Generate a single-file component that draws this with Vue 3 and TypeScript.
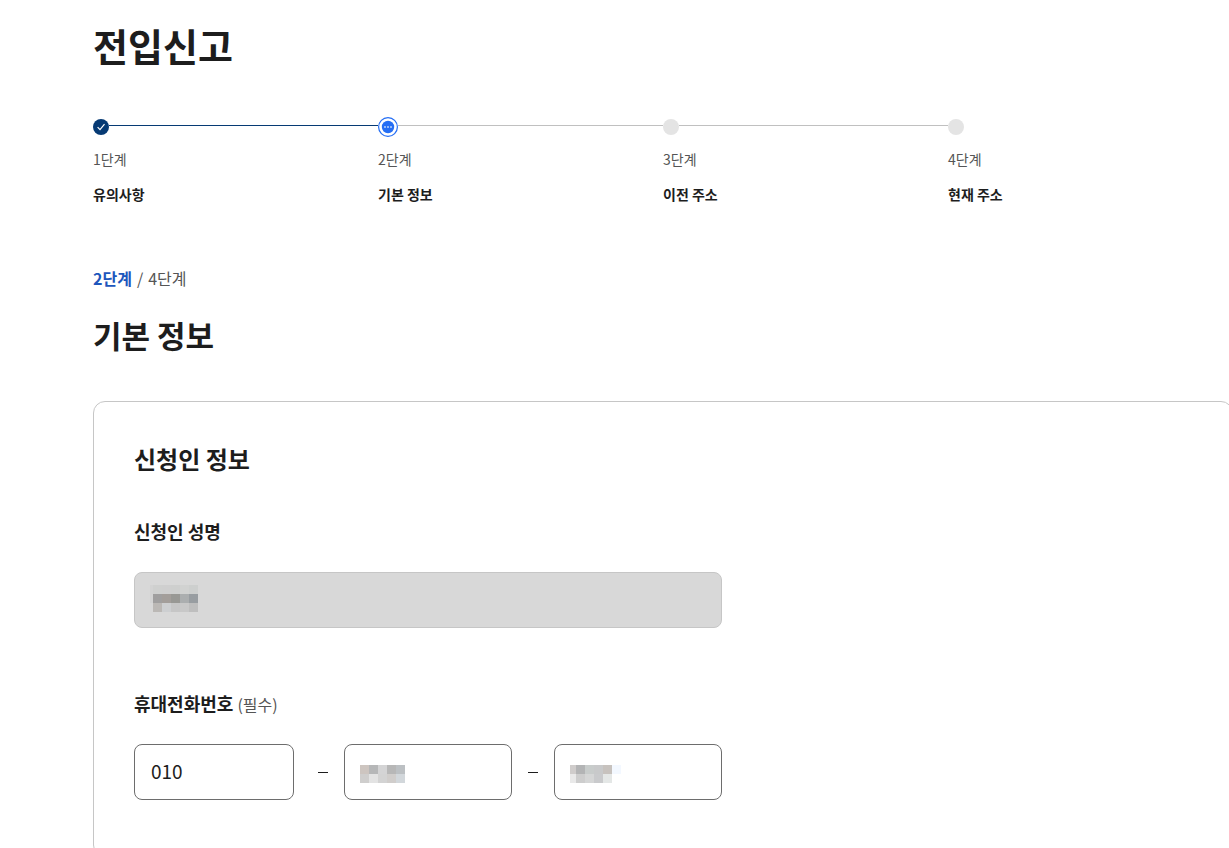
<script setup lang="ts">
type StepState = 'done' | 'current' | 'todo'

interface Step {
  label: string
  title: string
  state: StepState
}

interface Block {
  x: number
  y: number
  w: number
  h: number
  fill: string
}

const steps: Step[] = [
  { label: '1단계', title: '유의사항', state: 'done' },
  { label: '2단계', title: '기본 정보', state: 'current' },
  { label: '3단계', title: '이전 주소', state: 'todo' },
  { label: '4단계', title: '현재 주소', state: 'todo' },
]

const row = (x: number, y: number, fills: string[]): Block[] =>
  fills.map((fill, i) => ({ x: x + i * 9, y, w: 9, h: 9, fill }))

// Redaction mosaics covering the personal values
const nameMask: Block[] = [
  { x: 0, y: 0, w: 3, h: 18, fill: '#d3d3d3' },
  ...row(3, 0, ['#cfd0cf', '#cfcfcf', '#cecfce', '#d1d2d1', '#cdcfce']),
  ...row(3, 9, ['#a09f9f', '#a39e9a', '#989894', '#abaeaf', '#989da1']),
  ...row(3, 18, ['#bbb8b5', '#cdcfd1', '#c6c6c6', '#c8c8c8', '#bebebe']),
]
const middleMask: Block[] = [
  ...row(0, 0, ['#cdc5c0', '#b6b7b8', '#d4d4d5', '#b7b7b7', '#bcc0c3']),
  ...row(0, 9, ['#cfcecd', '#e3e3e3', '#d3d3d3', '#d0cdcb', '#d2d7db']),
]
const lastMask: Block[] = [
  { x: 0, y: 0, w: 6, h: 9, fill: '#cfcccb' },
  ...row(6, 0, ['#b3b4b5', '#c8cccb', '#c8c9ca', '#c7c2be', '#f3f8ff']),
  { x: 0, y: 9, w: 6, h: 9, fill: '#e9e9e9' },
  ...row(6, 9, ['#cdcdcd', '#d5d6d6', '#c9cacc', '#e4e7e6']),
]
</script>

<template>
  <main class="page">
    <h1 class="page-title">전입신고</h1>

    <ol class="steps">
      <li v-for="step in steps" :key="step.label" class="step">
        <div class="track">
          <svg v-if="step.state === 'done'" class="marker" width="16" height="16" viewBox="0 0 16 16" aria-hidden="true">
            <circle cx="8" cy="8" r="8" fill="#063a74" />
            <path d="M4.6 8.2 7 10.6 11.5 5.2" fill="none" stroke="#fff" stroke-width="1.2" />
          </svg>
          <svg v-else-if="step.state === 'current'" class="marker" width="20" height="20" viewBox="0 0 20 20" aria-hidden="true">
            <circle cx="10" cy="10" r="9.4" fill="#fff" stroke="#256ef4" stroke-width="1.2" />
            <circle cx="10" cy="10" r="6.2" fill="#256ef4" />
            <path d="M6 9.3h2v1.4H6zM9 9.3h2v1.4H9zM12 9.3h2v1.4h-2z" fill="#b5cffb" />
          </svg>
          <svg v-else class="marker" width="16" height="16" viewBox="0 0 16 16" aria-hidden="true">
            <circle cx="8" cy="8" r="8" fill="#e4e4e4" />
          </svg>
          <span class="line" :class="step.state"></span>
        </div>
        <span class="step-label">{{ step.label }}</span>
        <strong class="step-title">{{ step.title }}</strong>
      </li>
    </ol>

    <p class="progress"><strong>2단계</strong><span class="slash">/</span>4단계</p>
    <h2 class="section-title">기본 정보</h2>

    <form class="card" @submit.prevent>
      <h3 class="card-title">신청인 정보</h3>

      <div class="form-group">
        <label class="label" for="applicant">신청인 성명</label>
        <div class="field">
          <input id="applicant" type="text" disabled />
          <svg class="mask name" width="48" height="27" aria-hidden="true" shape-rendering="crispEdges">
            <rect v-for="(b, i) in nameMask" :key="i" :x="b.x" :y="b.y" :width="b.w" :height="b.h" :fill="b.fill" />
          </svg>
        </div>
      </div>

      <div class="form-group" role="group" aria-labelledby="phone-label">
        <label id="phone-label" class="label" for="phone-1">휴대전화번호 <span class="required">(필수)</span></label>
        <div class="phone">
          <div class="field prefix">
            <input id="phone-1" type="text" value="010" />
          </div>
          <span class="dash"></span>
          <div class="field">
            <input id="phone-2" type="text" aria-label="휴대전화번호 가운데 자리" />
            <svg class="mask" width="45" height="18" aria-hidden="true" shape-rendering="crispEdges">
              <rect v-for="(b, i) in middleMask" :key="i" :x="b.x" :y="b.y" :width="b.w" :height="b.h" :fill="b.fill" />
            </svg>
          </div>
          <span class="dash"></span>
          <div class="field">
            <input id="phone-3" type="text" aria-label="휴대전화번호 마지막 자리" />
            <svg class="mask" width="51" height="18" aria-hidden="true" shape-rendering="crispEdges">
              <rect v-for="(b, i) in lastMask" :key="i" :x="b.x" :y="b.y" :width="b.w" :height="b.h" :fill="b.fill" />
            </svg>
          </div>
        </div>
      </div>
    </form>
  </main>
</template>

<style>
body {
  margin: 0;
  background: #fff;
  overflow-x: hidden;
}
</style>

<style scoped>
.page {
  margin: 0 -4px 0 93px;
  padding-top: 17px;
  font-family: "Noto Sans CJK KR", "Noto Sans", sans-serif;
  color: #1d1d1d;
}

h1,
h2,
h3,
p,
ol {
  margin: 0;
  padding: 0;
}

.page-title {
  font-size: 38px;
  line-height: 56px;
  font-weight: 700;
}

.steps {
  display: grid;
  grid-template-columns: repeat(4, 1fr);
  margin-top: 44px;
  list-style: none;
}

.step {
  display: flex;
  flex-direction: column;
}

.track {
  display: flex;
  align-items: center;
  height: 20px;
}

.marker {
  flex: none;
}

.line {
  flex: 1;
  height: 1px;
  margin-bottom: 3px;
  background: #c0c0c0;
}

.line.done {
  background: #063a74;
}

.step:last-child .line {
  display: none;
}

.step-label {
  margin-top: 12px;
  font-size: 14px;
  line-height: 20px;
  font-weight: 400;
  color: #555;
}

.step-title {
  margin-top: 15px;
  font-size: 14px;
  line-height: 20px;
  font-weight: 700;
}

.progress {
  margin-top: 62px;
  font-size: 16px;
  line-height: 24px;
  font-weight: 400;
  color: #555;
}

.progress strong {
  font-weight: 700;
  color: #1d56bc;
}

.slash {
  margin: 0 5px;
}

.section-title {
  margin-top: 21px;
  font-size: 31px;
  line-height: 48px;
  font-weight: 700;
}

.card {
  margin-top: 42px;
  padding: 39px 40px 56px;
  border: 1px solid #c6c6c6;
  border-radius: 12px;
}

.card-title {
  font-size: 24px;
  line-height: 36px;
  font-weight: 700;
}

.form-group {
  display: flex;
  flex-direction: column;
  align-items: flex-start;
  max-width: 588px;
  margin-top: 40px;
}

.form-group + .form-group {
  margin-top: 61px;
}

.label {
  margin-bottom: 27px;
  font-size: 18px;
  line-height: 28px;
  font-weight: 700;
}

.required {
  font-size: 16px;
  line-height: 16px;
  font-weight: 400;
  color: #555;
}

.field {
  position: relative;
  display: flex;
  width: 100%;
}

.field input {
  box-sizing: border-box;
  width: 100%;
  height: 56px;
  padding: 0 16px 4px;
  border: 1px solid #6d6d6d;
  border-radius: 8px;
  background: #fff;
  font: inherit;
  font-size: 19px;
  color: #1d1d1d;
}

.field input:disabled {
  border-color: #c6c6c6;
  background: #d8d8d8;
}

.mask {
  position: absolute;
  left: 16px;
  top: 21px;
}

.mask.name {
  top: 13px;
}

.phone {
  display: flex;
  align-items: center;
  gap: 16px;
  width: 100%;
}

.phone .field {
  flex: 1;
}

.phone .prefix {
  flex: 0 0 160px;
  margin-right: 8px;
}

.dash {
  width: 10px;
  height: 1px;
  background: #1d1d1d;
}
</style>
